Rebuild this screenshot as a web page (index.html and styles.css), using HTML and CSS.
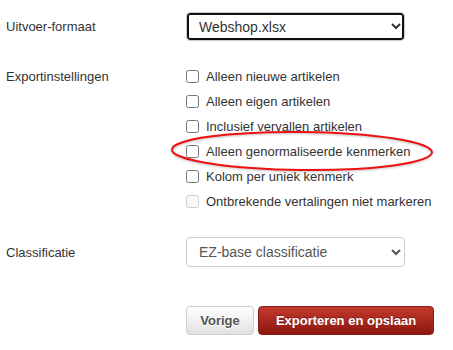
FILE: index.html
```html
<!DOCTYPE html>
<html lang="nl">
<head>
    <meta charset="UTF-8">
    <meta name="viewport" content="width=device-width, initial-scale=1.0">
    <title>Exporteren</title>
    <link rel="stylesheet" href="styles.css">
</head>
<body>
    <form class="export-form">
        <div class="form-row row-format">
            <label class="form-label">Uitvoer-formaat</label>
            <select class="form-select focused">
                <option>Webshop.xlsx</option>
            </select>
        </div>
        <div class="form-row row-settings">
            <label class="form-label line">Exportinstellingen</label>
            <div class="check-list">
                <label class="check"><input type="checkbox"> Alleen nieuwe artikelen</label>
                <label class="check"><input type="checkbox"> Alleen eigen artikelen</label>
                <label class="check"><input type="checkbox"> Inclusief vervallen artikelen</label>
                <label class="check"><input type="checkbox"> Alleen genormaliseerde kenmerken</label>
                <label class="check"><input type="checkbox"> Kolom per uniek kenmerk</label>
                <label class="check disabled"><input type="checkbox" disabled> Ontbrekende vertalingen niet markeren</label>
            </div>
        </div>
        <div class="form-row row-class">
            <label class="form-label">Classificatie</label>
            <select class="form-select">
                <option>EZ-base classificatie</option>
            </select>
        </div>
        <div class="form-row row-buttons">
            <span class="form-label"></span>
            <div class="buttons">
                <button type="button" class="btn btn-default">Vorige</button>
                <button type="button" class="btn btn-primary">Exporteren en opslaan</button>
            </div>
        </div>
    </form>
    <svg class="marker" width="276" height="50" viewBox="0 0 276 50">
        <ellipse cx="136" cy="24" rx="130" ry="19" transform="rotate(0.6 136 24)" fill="none" stroke="#ee1111" stroke-width="2"/>
    </svg>
</body>
</html>
```

FILE: styles.css
```css
* {
    margin: 0;
    padding: 0;
    box-sizing: border-box;
    font-family: "Liberation Sans", Arial, sans-serif;
}
body {
    background: #fff;
    color: #333;
    font-size: 13px;
    position: relative;
}
.export-form {
    padding: 12px 0 0 6px;
}
.form-row {
    display: flex;
    align-items: center;
}
.form-label {
    width: 180px;
    flex-shrink: 0;
}
.row-format {
    margin-bottom: 23px;
}
.row-settings {
    align-items: flex-start;
    margin-bottom: 23px;
}
.row-class {
    margin-bottom: 39px;
}
.form-label.line {
    line-height: 25px;
}
.form-select {
    width: 219px;
    height: 29px;
    border: 1px solid #ccc;
    border-radius: 4px;
    background: #fff;
    color: #555;
    font-size: 14px;
    padding: 0 6px 0 8px;
}
.row-class .form-select {
    height: 30px;
}
.form-select.focused {
    color: #333;
    box-shadow: inset 0 0 0 2px #111;
}
.check-list {
    display: flex;
    flex-direction: column;
}
.check {
    display: flex;
    align-items: center;
    height: 25px;
    gap: 7px;
}
.check input {
    width: 13px;
    height: 13px;
    margin: 0;
}
.buttons {
    display: flex;
    gap: 4px;
}
.btn {
    height: 29px;
    padding: 0 12px;
    font-size: 13px;
    font-weight: bold;
    border-radius: 4px;
    white-space: nowrap;
    cursor: pointer;
}
.btn-default {
    width: 68px;
    color: #555;
    border: 1px solid #ccc;
    background: linear-gradient(#ffffff, #e2e2e2);
    text-shadow: 0 1px 0 #fff;
}
.btn-primary {
    width: 176px;
    color: #fff;
    border: 1px solid #8a1a12;
    background: linear-gradient(#c43a2c, #8c1710);
    text-shadow: 0 -1px 0 rgba(0, 0, 0, 0.3);
}
.marker {
    position: absolute;
    left: 166px;
    top: 127px;
    filter: drop-shadow(0 1px 1px rgba(0, 0, 0, 0.25));
}
```
